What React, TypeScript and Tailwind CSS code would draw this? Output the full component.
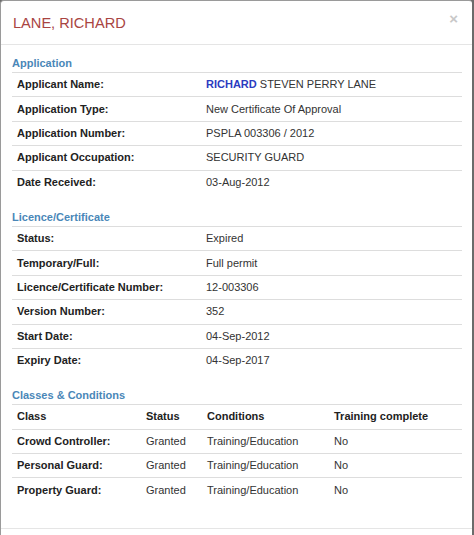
import React from "react";

const appRows: [string, React.ReactNode][] = [
  [
    "Applicant Name:",
    <>
      <span className="font-bold text-[#2b3bc0]">RICHARD</span> STEVEN PERRY LANE
    </>,
  ],
  ["Application Type:", "New Certificate Of Approval"],
  ["Application Number:", "PSPLA 003306 / 2012"],
  ["Applicant Occupation:", "SECURITY GUARD"],
  ["Date Received:", "03-Aug-2012"],
];

const licRows: [string, string][] = [
  ["Status:", "Expired"],
  ["Temporary/Full:", "Full permit"],
  ["Licence/Certificate Number:", "12-003306"],
  ["Version Number:", "352"],
  ["Start Date:", "04-Sep-2012"],
  ["Expiry Date:", "04-Sep-2017"],
];

const classRows = ["Crowd Controller:", "Personal Guard:", "Property Guard:"];

function InfoTable({ rows }: { rows: [string, React.ReactNode][] }) {
  return (
    <div>
      {rows.map(([k, v], i) => (
        <div
          key={i}
          className="grid grid-cols-[189px_1fr] h-[24.4px] border-t border-[#dddddd] items-center leading-[13px]"
        >
          <div className="pl-[5px] font-bold text-[#222]">{k}</div>
          <div className="pl-[5px] text-[#333]">{v}</div>
        </div>
      ))}
    </div>
  );
}

function Heading({ children, className }: { children: React.ReactNode; className: string }) {
  return (
    <div className={`font-bold text-[#4a87b8] leading-[13px] pb-[2px] ${className}`}>{children}</div>
  );
}

export default function App() {
  return (
    <div
      className="w-[474px] h-[535px] bg-[#6b6b6b] overflow-hidden text-[11px]"
      style={{ fontFamily: '"Liberation Sans", Arial, sans-serif' }}
    >
      <div className="w-[472px] h-[535px] bg-white border-l-[1.5px] border-t border-[#9a9a9a] rounded-tl-[4px] rounded-tr-[3px] flex flex-col">
        <div className="h-[44px] border-b border-[#e5e5e5] flex items-center justify-between pl-[12px] pr-[14px] shrink-0">
          <div className="text-[14.6px] text-[#a94442] leading-none pt-[1px]">LANE, RICHARD</div>
          <div className="text-[15px] font-bold text-[#c8c8c8] leading-none -mt-[9px]">×</div>
        </div>
        <div className="px-[11px] pr-[10px] pt-[12px] flex-1">
          <Heading className="">Application</Heading>
          <InfoTable rows={appRows} />
          <Heading className="mt-[17px]">Licence/Certificate</Heading>
          <InfoTable rows={licRows} />
          <Heading className="mt-[17px]">Classes &amp; Conditions</Heading>
          <div>
            <div className="grid grid-cols-[129px_61px_127px_1fr] h-[24.4px] border-t border-[#dddddd] items-center leading-[13px] font-bold text-[#222]">
              <div className="pl-[5px]">Class</div>
              <div className="pl-[5px]">Status</div>
              <div className="pl-[5px]">Conditions</div>
              <div className="pl-[5px]">Training complete</div>
            </div>
            {classRows.map((c) => (
              <div
                key={c}
                className="grid grid-cols-[129px_61px_127px_1fr] h-[24.4px] border-t border-[#dddddd] items-center leading-[13px] text-[#333]"
              >
                <div className="pl-[5px] font-bold text-[#222]">{c}</div>
                <div className="pl-[5px]">Granted</div>
                <div className="pl-[5px]">Training/Education</div>
                <div className="pl-[5px]">No</div>
              </div>
            ))}
          </div>
        </div>
        <div className="h-[7px] border-t border-[#e5e5e5] shrink-0"></div>
      </div>
    </div>
  );
}
